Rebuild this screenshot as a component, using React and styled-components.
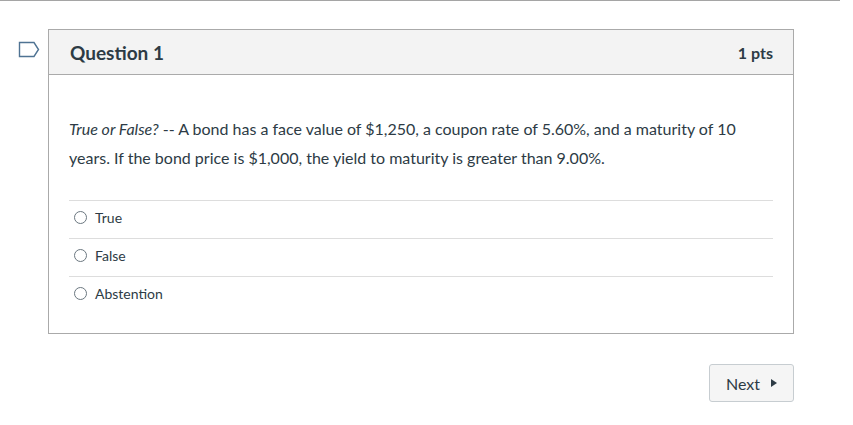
import React from "react";
import styled, { createGlobalStyle } from "styled-components";

const Global = createGlobalStyle`
  body {
    margin: 0;
    background: #fff;
    font-family: Lato, "Liberation Sans", sans-serif;
    color: #2d3b45;
  }
`;

const Page = styled.div`
  width: 853px;
  height: 425px;
  overflow: hidden;
`;

const TopRule = styled.div`
  width: 840px;
  height: 1px;
  background: #a5a5a5;
  margin-bottom: 28px;
`;

const Row = styled.div`
  display: flex;
  align-items: flex-start;
`;

const FlagCol = styled.div`
  width: 48px;
  display: flex;
  justify-content: flex-start;
  padding: 12px 0 0 18px;
  box-sizing: border-box;
`;

const Card = styled.div`
  width: 746px;
  border: 1px solid #aaaaaa;
  box-sizing: border-box;
`;

const Header = styled.div`
  height: 44px;
  background: #f3f3f3;
  border-bottom: 1px solid #aaaaaa;
  display: flex;
  align-items: center;
  justify-content: space-between;
  padding: 0 20px 0 21px;
`;

const Title = styled.h2`
  margin: 0;
  font-size: 19px;
  font-weight: 700;
  color: #2d3b45;
`;

const Points = styled.span`
  font-size: 16px;
  font-weight: 700;
  color: #2d3b45;
`;

const Body = styled.div`
  padding: 39px 20px 19px 20px;
`;

const Text = styled.p`
  margin: 0 0 28px;
  font-size: 16px;
  line-height: 29px;
  color: #2d3b45;
  padding-right: 20px;
`;

const Option = styled.label`
  display: flex;
  align-items: center;
  gap: 8px;
  padding: 0 0 4px 5px;
  height: 33px;
  border-top: 1px solid #dddddd;
  font-size: 14px;
  color: #2d3b45;
`;

const Radio = styled.span`
  width: 11px;
  height: 11px;
  border: 1px solid #6b7780;
  border-radius: 50%;
  background: #fff;
`;

const Footer = styled.div`
  width: 794px;
  display: flex;
  justify-content: flex-end;
  padding-top: 30px;
`;

const NextButton = styled.button`
  display: flex;
  align-items: center;
  gap: 11px;
  height: 38px;
  padding: 0 16px;
  background: #f5f5f5;
  border: 1px solid #c7cdd1;
  border-radius: 3px;
  font-family: Lato, "Liberation Sans", sans-serif;
  font-size: 16px;
  color: #2d3b45;
`;

const options = ["True", "False", "Abstention"];

export default function App() {
  return (
    <Page>
      <Global />
      <TopRule />
      <Row>
        <FlagCol>
          <svg width="22" height="17" viewBox="0 0 22 17">
            <path d="M1.5 1.5 H16 L20.5 8.5 L16 15.5 H1.5 Z" fill="none" stroke="#4f7393" strokeWidth="1.4" />
          </svg>
        </FlagCol>
        <Card>
          <Header>
            <Title>Question 1</Title>
            <Points>1 pts</Points>
          </Header>
          <Body>
            <Text>
              <em>True or False?</em> -- A bond has a face value of $1,250, a coupon rate of 5.60%, and a
              maturity of 10 years. If the bond price is $1,000, the yield to maturity is greater than 9.00%.
            </Text>
            {options.map((o) => (
              <Option key={o}>
                <Radio />
                {o}
              </Option>
            ))}
          </Body>
        </Card>
      </Row>
      <Footer>
        <NextButton>
          Next
          <svg width="6" height="8" viewBox="0 0 6 8">
            <path d="M0 0 L6 4 L0 8 Z" fill="#2d3b45" />
          </svg>
        </NextButton>
      </Footer>
    </Page>
  );
}
